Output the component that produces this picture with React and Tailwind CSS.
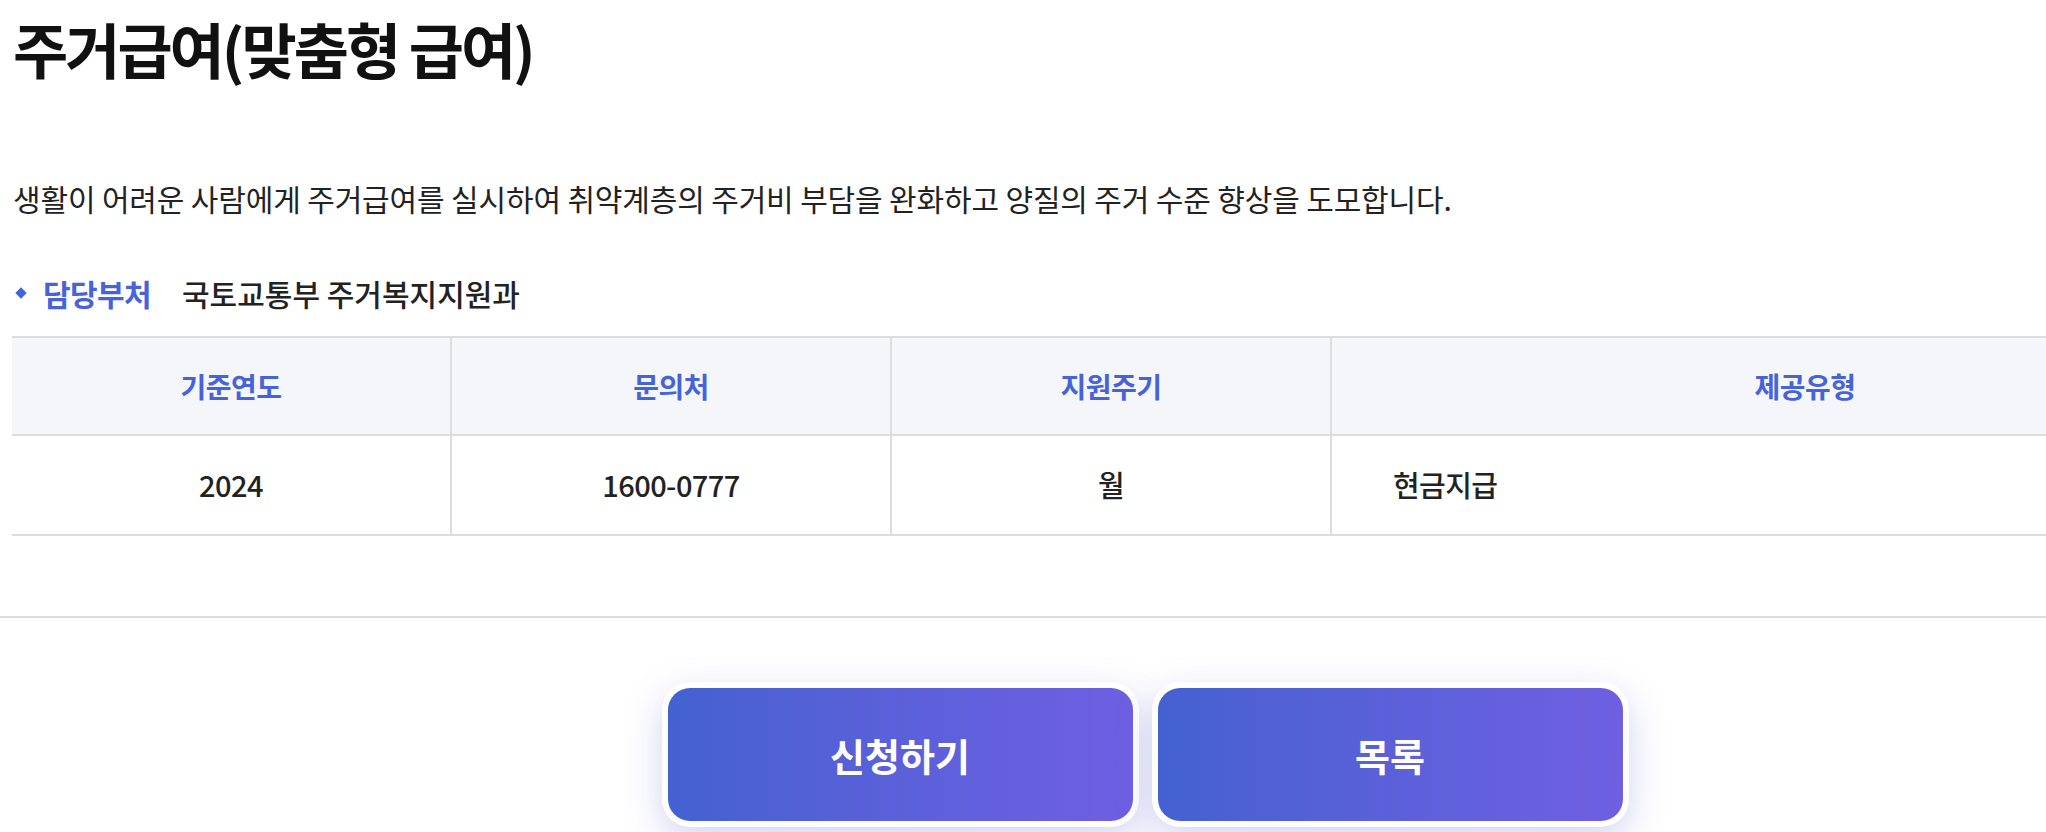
const font = { fontFamily: '"Noto Sans CJK KR", "Noto Sans", sans-serif' };

const cols = [
  { head: '기준연도', value: '2024', align: 'center' },
  { head: '문의처', value: '1600-0777', align: 'center' },
  { head: '지원주기', value: '월', align: 'center' },
  { head: '제공유형', value: '현금지급', align: 'left' },
];

export default function App() {
  return (
    <div className="w-full h-[832px] overflow-hidden bg-white" style={font}>
      <div className="w-[2292px]">
        <div className="w-[2266px] ml-3">
          <h1 className="h-[96px] flex items-center pl-[1px] text-[60px] font-bold tracking-[-0.05em] text-[#111111]">
            주거급여(맞춤형 급여)
          </h1>

          <p className="mt-[84px] h-[36px] leading-[36px] pl-[1px] text-[30px] tracking-[-0.005em] text-[#222222]">
            생활이 어려운 사람에게 주거급여를 실시하여 취약계층의 주거비 부담을 완화하고 양질의 주거 수준 향상을 도모합니다.
          </p>

          <div className="mt-[61px] h-[32px] flex items-center">
            <span className="ml-[5px] w-[8px] h-[8px] rotate-45 bg-[#4763d9]" />
            <span className="ml-[18px] text-[30px] font-bold tracking-[-0.02em] text-[#4763d9]">담당부처</span>
            <span className="ml-[31px] text-[30px] font-medium tracking-[0em] text-[#222222]">
              국토교통부 주거복지지원과
            </span>
          </div>

          <div className="mt-[27px] border-t-2 border-[#dddddd]">
            <div className="grid grid-cols-[440px_440px_440px_1fr] bg-[#f5f6fa] border-b-2 border-[#dddddd]">
              {cols.map((c, i) => (
                <div
                  key={c.head}
                  className={`h-[96px] flex items-center justify-center text-[28px] font-semibold tracking-[-0.02em] text-[#4763d9] ${i < 3 ? 'border-r-2 border-[#dddddd]' : ''}`}
                >
                  {c.head}
                </div>
              ))}
            </div>
            <div className="grid grid-cols-[440px_440px_440px_1fr] border-b-2 border-[#dddddd]">
              {cols.map((c, i) => (
                <div
                  key={c.head}
                  className={`h-[98px] flex items-center text-[29px] font-medium tracking-[-0.02em] text-[#222222] ${c.align === 'center' ? 'justify-center' : 'pl-[61px]'} ${i < 3 ? 'border-r-2 border-[#dddddd]' : ''}`}
                >
                  {c.value}
                </div>
              ))}
            </div>
          </div>
        </div>

        <div className="mt-[80px] h-[2px] bg-[#dddddd]" />

        <div className="w-[2266px] ml-3 mt-[64px] flex justify-center gap-[13px]">
          {['신청하기', '목록'].map((t) => (
            <button
              key={t}
              className="w-[477px] h-[145px] p-[6px] rounded-[28px] bg-white shadow-[0_12px_36px_rgba(100,100,210,0.28)]"
            >
              <span className="w-full h-full flex items-center justify-center rounded-[22px] bg-gradient-to-r from-[#4461d1] to-[#6f5fe2] text-[38px] font-bold text-white">
                {t}
              </span>
            </button>
          ))}
        </div>
      </div>
    </div>
  );
}
